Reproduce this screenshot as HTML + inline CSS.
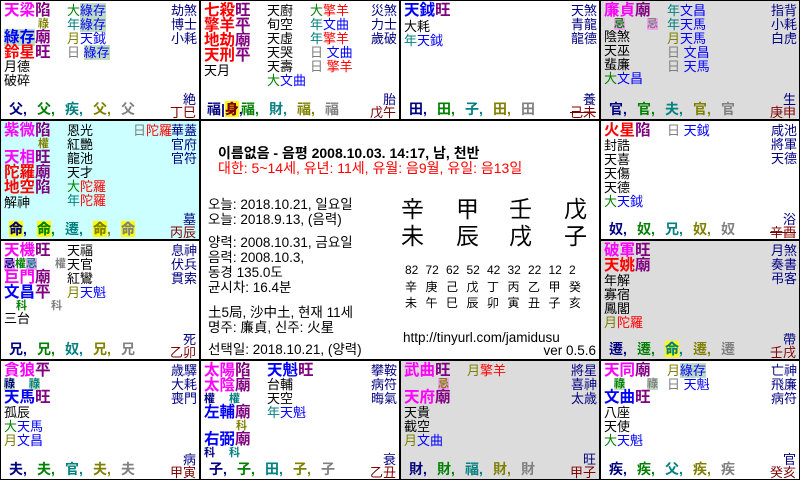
<!DOCTYPE html>
<html><head><meta charset="utf-8">
<style>
*{margin:0;padding:0;box-sizing:border-box}
body{width:800px;height:480px;background:#000;position:relative;overflow:hidden;font-family:"Liberation Sans","Noto Sans CJK KR",sans-serif;color:#000}
.c{position:absolute;width:198px;height:118px;background:#fff;overflow:hidden}
.g{background:#dcdcdc}.cy{background:#ccffff}
.L{position:absolute;left:3px;top:2px}
.M{position:absolute;left:66px;top:3px;font-size:13px;line-height:14px;white-space:nowrap}
.R{position:absolute;right:2px;top:3px;font-size:13px;line-height:14px;text-align:right;color:#000080;white-space:nowrap}
.m{font-size:15.5px;font-weight:bold;line-height:15px;height:15px;white-space:nowrap}
.k{font-size:11px;font-weight:bold;line-height:12px;height:12px;white-space:nowrap}
.s{font-size:13px;line-height:14px;height:14px;white-space:nowrap}
.mg{color:#ff00ff}.pu{color:#800080}.rd{color:#ff0000}.bl{color:#0000ff}
.gr{color:#008000}.te{color:#008080}.ol{color:#808000}.gy{color:#808080}.nv{color:#000080}
.lu{background:#c0dcc0}.ji{background:#f0a0f0}
.ls{position:absolute;right:3px;top:88px;font-size:13px;color:#000080}
.P{position:absolute;left:8px;top:100px;font-size:14px;font-weight:bold;white-space:nowrap;line-height:16px}
.P span{display:inline-block;width:28px}
.y{background:#ffff00}
.GZ{position:absolute;right:3px;top:101px;font-size:13px;color:#800000}
.ctr{position:absolute;left:201px;top:121px;width:398px;height:238px;background:#fff}
.ab{position:absolute;white-space:nowrap}
</style></head><body>

<!-- 丁巳 -->
<div class="c" style="left:1px;top:1px">
<div class="L">
<div class="m"><span class="mg">天梁</span><span class="pu">陷</span></div>
<div class="k ol" style="padding-left:34px">祿</div>
<div class="m"><span class="bl lu">綠存</span><span class="pu">廟</span></div>
<div class="m"><span class="rd">鈴星</span><span class="pu">旺</span></div>
<div class="s">月德</div><div class="s">破碎</div>
</div>
<div class="M"><div><span class="gr">大</span><span class="bl lu">綠存</span></div><div><span class="te">年</span><span class="bl lu">綠存</span></div><div><span class="ol">月</span><span class="bl">天鉞</span></div><div><span class="gy">日</span> <span class="bl lu">綠存</span></div></div>
<div class="R">劫煞<br>博士<br>小耗</div>
<div class="ls">絶</div>
<div class="P"><span class="nv">父,</span><span class="gr">父,</span><span class="te">疾,</span><span class="ol">父,</span><span class="gy">父</span></div>
<div class="GZ">丁巳</div>
</div>

<!-- 戊午 -->
<div class="c" style="left:201px;top:1px">
<div class="L">
<div class="m"><span class="rd">七殺</span><span class="pu">旺</span></div>
<div class="m"><span class="rd">擎羊</span><span class="pu">平</span></div>
<div class="m"><span class="rd">地劫</span><span class="pu">廟</span></div>
<div class="m"><span class="rd">天刑</span><span class="pu">平</span></div>
<div class="s" style="margin-top:1px">天月</div>
</div>
<div class="M" style="left:66px">天廚<br>旬空<br>天虛<br>天哭<br>天壽<br><span class="gr">大</span><span class="bl">文曲</span></div>
<div class="M" style="left:109px"><div><span class="gr">大</span><span class="rd">擎羊</span></div><div><span class="te">年</span><span class="bl">文曲</span></div><div><span class="te">年</span><span class="rd">擎羊</span></div><div><span class="gy">日</span> <span class="bl">文曲</span></div><div><span class="gy">日</span> <span class="rd">擎羊</span></div></div>
<div class="R">災煞<br>力士<br>歲破</div>
<div class="ls">胎</div>
<div class="P" style="left:6px"><span class="nv" style="width:34px">福|<b class="y" style="color:#800000">身</b>,</span><span class="gr">福,</span><span class="te">財,</span><span class="ol">福,</span><span class="gy">福</span></div>
<div class="GZ">戊午</div>
</div>

<!-- 己未 -->
<div class="c" style="left:401px;top:1px">
<div class="L">
<div class="m"><span class="bl">天鉞</span><span class="pu">旺</span></div>
<div class="s" style="margin-top:2px">大耗</div>
<div class="s"><span class="te">年</span><span class="bl">天鉞</span></div>
</div>
<div class="R">天煞<br>青龍<br>龍德</div>
<div class="ls">養</div>
<div class="P"><span class="nv">田,</span><span class="gr">田,</span><span class="te">子,</span><span class="ol">田,</span><span class="gy">田</span></div>
<div class="GZ"><s>己未</s></div>
</div>

<!-- 庚申 -->
<div class="c g" style="left:601px;top:1px">
<div class="L">
<div class="m"><span class="mg">廉貞</span><span class="pu">廟</span></div>
<div class="k"><span class="gr ji" style="margin-left:10px">忌</span><span class="gy ji" style="margin-left:22px">忌</span></div>
<div class="s">陰煞</div><div class="s">天巫</div><div class="s">蜚廉</div>
<div class="s"><span class="gr">大</span><span class="bl">文昌</span></div>
</div>
<div class="M"><div><span class="te">年</span><span class="bl">文昌</span></div><div><span class="te">年</span><span class="bl">天馬</span></div><div><span class="ol">月</span><span class="bl">天馬</span></div><div><span class="gy">日</span> <span class="bl">文昌</span></div><div><span class="gy">日</span> <span class="bl">天馬</span></div></div>
<div class="R">指背<br>小耗<br>白虎</div>
<div class="ls">生</div>
<div class="P"><span class="nv">官,</span><span class="gr">官,</span><span class="te">夫,</span><span class="ol">官,</span><span class="gy">官</span></div>
<div class="GZ">庚申</div>
</div>

<!-- 丙辰 -->
<div class="c cy" style="left:1px;top:121px">
<div class="L">
<div class="m"><span class="mg">紫微</span><span class="pu">陷</span></div>
<div class="k ol" style="padding-left:34px">權</div>
<div class="m"><span class="mg">天相</span><span class="pu">旺</span></div>
<div class="m"><span class="rd">陀羅</span><span class="pu">廟</span></div>
<div class="m"><span class="rd">地空</span><span class="pu">陷</span></div>
<div class="s" style="margin-top:1px">解神</div>
</div>
<div class="M">恩光<br>紅艷<br>龍池<br>天才<br><span class="gr">大</span><span class="rd">陀羅</span><br><span class="te">年</span><span class="rd">陀羅</span></div>
<div class="M" style="left:132px"><span class="gy">日</span><span class="rd">陀羅</span></div>
<div class="R">華蓋<br>官府<br>官符</div>
<div class="ls">墓</div>
<div class="P"><span class="nv"><b class="y">命</b>,</span><span class="gr"><b class="y">命</b>,</span><span class="te">遷,</span><span class="ol"><b class="y">命</b>,</span><span class="gy"><b class="y">命</b></span></div>
<div class="GZ">丙辰</div>
</div>

<!-- 辛酉 -->
<div class="c" style="left:601px;top:121px">
<div class="L">
<div class="m"><span class="rd">火星</span><span class="pu">陷</span></div>
<div class="s" style="margin-top:1px">封誥</div><div class="s">天喜</div><div class="s">天傷</div><div class="s">天德</div>
<div class="s"><span class="gr">大</span><span class="bl">天鉞</span></div>
</div>
<div class="M"><span class="gy">日</span> <span class="bl">天鉞</span></div>
<div class="R">咸池<br>將軍<br>天德</div>
<div class="ls">浴</div>
<div class="P"><span class="nv">奴,</span><span class="gr">奴,</span><span class="te">兄,</span><span class="ol">奴,</span><span class="gy">奴</span></div>
<div class="GZ"><s>辛酉</s></div>
</div>

<!-- 乙卯 -->
<div class="c" style="left:1px;top:241px">
<div class="L">
<div class="m"><span class="mg">天機</span><span class="pu">旺</span></div>
<div class="k"><span class="nv ji">忌</span><span class="gr">權</span><span class="te ji">忌</span><span class="gy" style="margin-left:18px">權</span></div>
<div class="m"><span class="mg">巨門</span><span class="pu">廟</span></div>
<div class="m"><span class="bl">文昌</span><span class="pu">平</span></div>
<div class="k"><span class="gr" style="margin-left:12px">科</span><span class="gy" style="margin-left:24px">科</span></div>
<div class="s">三台</div>
</div>
<div class="M">天福<br>天官<br>紅鸞<br><span class="ol">月</span><span class="bl">天魁</span></div>
<div class="R">息神<br>伏兵<br>貫索</div>
<div class="ls">死</div>
<div class="P"><span class="nv">兄,</span><span class="gr">兄,</span><span class="te">奴,</span><span class="ol">兄,</span><span class="gy">兄</span></div>
<div class="GZ">乙卯</div>
</div>

<!-- 壬戌 -->
<div class="c g" style="left:601px;top:241px">
<div class="L">
<div class="m"><span class="mg">破軍</span><span class="pu">旺</span></div>
<div class="m"><span class="rd">天姚</span><span class="pu">廟</span></div>
<div class="s" style="margin-top:1px">年解</div><div class="s">寡宿</div><div class="s">鳳閣</div>
<div class="s"><span class="ol">月</span><span class="rd">陀羅</span></div>
</div>
<div class="R">月煞<br>奏書<br>弔客</div>
<div class="ls">帶</div>
<div class="P"><span class="nv">遷,</span><span class="gr">遷,</span><span class="te"><b class="y">命</b>,</span><span class="ol">遷,</span><span class="gy">遷</span></div>
<div class="GZ">壬戌</div>
</div>

<!-- 甲寅 -->
<div class="c" style="left:1px;top:361px">
<div class="L">
<div class="m"><span class="mg">貪狼</span><span class="pu">平</span></div>
<div class="k"><span class="nv lu">祿</span><span class="te lu" style="margin-left:14px">祿</span></div>
<div class="m"><span class="bl">天馬</span><span class="pu">旺</span></div>
<div class="s" style="margin-top:1px">孤辰</div>
<div class="s"><span class="gr">大</span><span class="bl">天馬</span></div>
<div class="s"><span class="ol">月</span><span class="bl">文昌</span></div>
</div>
<div class="R">歳驛<br>大耗<br>喪門</div>
<div class="ls">病</div>
<div class="P"><span class="nv">夫,</span><span class="gr">夫,</span><span class="te">官,</span><span class="ol">夫,</span><span class="gy">夫</span></div>
<div class="GZ">甲寅</div>
</div>

<!-- 乙丑 -->
<div class="c" style="left:201px;top:361px">
<div class="L">
<div class="m"><span class="mg">太陽</span><span class="pu">陷</span></div>
<div class="m"><span class="mg">太陰</span><span class="pu">廟</span></div>
<div class="k"><span class="nv">權</span><span class="te" style="margin-left:14px">權</span></div>
<div class="m"><span class="bl">左輔</span><span class="pu">廟</span></div>
<div class="k ol" style="padding-left:32px">科</div>
<div class="m"><span class="bl">右弼</span><span class="pu">廟</span></div>
<div class="k"><span class="nv">科</span><span class="te" style="margin-left:14px">科</span></div>
</div>
<div class="L" style="left:66px"><div class="m"><span class="bl">天魁</span><span class="pu">旺</span></div>
<div class="s">台輔</div><div class="s">天空</div><div class="s"><span class="te">年</span><span class="bl">天魁</span></div></div>
<div class="R">攀鞍<br>病符<br>晦氣</div>
<div class="ls">衰</div>
<div class="P"><span class="nv">子,</span><span class="gr">子,</span><span class="te">田,</span><span class="ol">子,</span><span class="gy">子</span></div>
<div class="GZ">乙丑</div>
</div>

<!-- 甲子 -->
<div class="c g" style="left:401px;top:361px">
<div class="L">
<div class="m"><span class="mg">武曲</span><span class="pu">旺</span></div>
<div class="k"><span class="ol ji" style="margin-left:34px">忌</span></div>
<div class="m"><span class="mg">天府</span><span class="pu">廟</span></div>
<div class="s" style="margin-top:1px">天貴</div><div class="s">截空</div>
<div class="s"><span class="ol">月</span><span class="bl">文曲</span></div>
</div>
<div class="M"><span class="ol">月</span><span class="rd">擎羊</span></div>
<div class="R">將星<br>喜神<br>太歳</div>
<div class="ls">旺</div>
<div class="P"><span class="nv">財,</span><span class="gr">財,</span><span class="te">福,</span><span class="ol">財,</span><span class="gy">財</span></div>
<div class="GZ">甲子</div>
</div>

<!-- 癸亥 -->
<div class="c" style="left:601px;top:361px">
<div class="L">
<div class="m"><span class="mg">天同</span><span class="pu">廟</span></div>
<div class="k"><span class="gr lu" style="margin-left:10px">祿</span><span class="gy lu" style="margin-left:22px">祿</span></div>
<div class="m"><span class="bl">文曲</span><span class="pu">旺</span></div>
<div class="s" style="margin-top:1px">八座</div><div class="s">天使</div>
<div class="s"><span class="gr">大</span><span class="bl">天魁</span></div>
</div>
<div class="M"><div><span class="ol">月</span><span class="bl lu">綠存</span></div><div><span class="gy">日</span> <span class="bl">天魁</span></div></div>
<div class="R">亡神<br>飛廉<br>病符</div>
<div class="ls">官</div>
<div class="P"><span class="nv">疾,</span><span class="gr">疾,</span><span class="te">父,</span><span class="ol">疾,</span><span class="gy">疾</span></div>
<div class="GZ">癸亥</div>
</div>

<!-- center -->
<div class="ctr">
<div class="ab" style="left:17px;top:22px;font-size:14px;font-weight:bold">이름없음 - 음평 2008.10.03. 14:17, 남, 천반</div>
<div class="ab" style="left:17px;top:37px;font-size:14px;color:#ff0000">대한: 5~14세, 유년: 11세, 유월: 음9월, 유일: 음13일</div>
<div class="ab" style="left:7px;top:76px;font-size:13.5px;line-height:15px">오늘: 2018.10.21, 일요일<br>오늘: 2018.9.13, (음력)</div>
<div class="ab" style="left:7px;top:114px;font-size:13.5px;line-height:15px">양력: 2008.10.31, 금요일<br>음력: 2008.10.3,<br>동경 135.0도<br>균시차: 16.4분</div>
<div class="ab" style="left:7px;top:184px;font-size:13.5px;line-height:15px">土5局, 沙中土, 현재 11세<br>명주: 廉貞, 신주: 火星</div>
<div class="ab" style="left:7px;top:217px;font-size:13.5px">선택일: 2018.10.21, (양력)</div>
<div class="ab" style="left:200px;top:75px;font-size:23px;line-height:27px;word-spacing:0">
<span style="display:inline-block;width:55px">辛</span><span style="display:inline-block;width:53px">甲</span><span style="display:inline-block;width:55px">壬</span>戊<br>
<span style="display:inline-block;width:55px">未</span><span style="display:inline-block;width:53px">辰</span><span style="display:inline-block;width:55px">戌</span>子</div>
<div class="ab" style="left:204px;top:141px;font-size:12px;line-height:16.5px">
<div><span style="display:inline-block;width:20.5px">82</span><span style="display:inline-block;width:20.5px">72</span><span style="display:inline-block;width:20.5px">62</span><span style="display:inline-block;width:20.5px">52</span><span style="display:inline-block;width:20.5px">42</span><span style="display:inline-block;width:20.5px">32</span><span style="display:inline-block;width:20.5px">22</span><span style="display:inline-block;width:20.5px">12</span>2</div>
<div><span style="display:inline-block;width:20.5px">辛</span><span style="display:inline-block;width:20.5px">庚</span><span style="display:inline-block;width:20.5px">己</span><span style="display:inline-block;width:20.5px">戊</span><span style="display:inline-block;width:20.5px">丁</span><span style="display:inline-block;width:20.5px">丙</span><span style="display:inline-block;width:20.5px">乙</span><span style="display:inline-block;width:20.5px">甲</span>癸</div>
<div><span style="display:inline-block;width:20.5px">未</span><span style="display:inline-block;width:20.5px">午</span><span style="display:inline-block;width:20.5px">巳</span><span style="display:inline-block;width:20.5px">辰</span><span style="display:inline-block;width:20.5px">卯</span><span style="display:inline-block;width:20.5px">寅</span><span style="display:inline-block;width:20.5px">丑</span><span style="display:inline-block;width:20.5px">子</span>亥</div>
</div>
<div class="ab" style="left:202px;top:209px;font-size:13.5px">http://tinyurl.com/jamidusu</div>
<div class="ab" style="right:3px;top:222px;font-size:13.5px">ver 0.5.6</div>
</div>
</body></html>
